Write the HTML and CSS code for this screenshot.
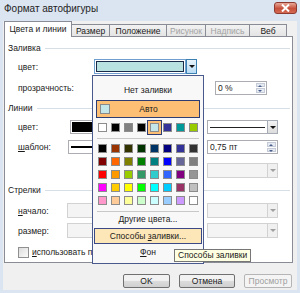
FILE: index.html
```html
<!DOCTYPE html>
<html lang="ru">
<head>
    <meta charset="UTF-8">
    <title>Формат автофигуры</title>
    <link rel="stylesheet" href="styles.css">
</head>
<body>
    <div class="window">
        <div class="titlebar">
            <span class="title">Формат автофигуры</span>
            <div class="close">
                <svg width="9" height="8" viewBox="0 0 9 8"><path d="M1 0.5 L8 7.5 M8 0.5 L1 7.5" stroke="#fff" stroke-width="2"/></svg>
            </div>
        </div>
        <div class="client">
            <div class="tabs">
                <div class="tab active" style="width:68px">Цвета и линии</div>
                <div class="tab" style="width:39px">Размер</div>
                <div class="tab" style="width:58px">Положение</div>
                <div class="tab disabled" style="width:40px">Рисунок</div>
                <div class="tab disabled" style="width:45px">Надпись</div>
                <div class="tab" style="width:38px">Веб</div>
            </div>
            <div class="panel">
                <div class="group-head"><span>Заливка</span></div>
                <div class="row r-fill">
                    <span class="label wide">цвет:</span>
                    <div class="combo fill-combo">
                        <div class="fill-field"><div class="fill-inner"></div></div>
                        <div class="drop active-drop"><i class="tri"></i></div>
                    </div>
                </div>
                <div class="row r-trans">
                    <span class="label">прозрачность:</span>
                    <div class="spin narrow"><span class="spin-text">0 %</span><div class="spin-btns"><i class="up"></i><i class="down"></i></div></div>
                </div>
                <div class="group-head g-lines"><span>Линии</span></div>
                <div class="row r-line">
                    <span class="label">цвет:</span>
                    <div class="swatch-box"></div>
                    <div class="combo right-ctl line-combo">
                        <div class="line-field"><i class="line-sample"></i></div>
                        <div class="drop"><i class="tri"></i></div>
                    </div>
                </div>
                <div class="row r-line">
                    <span class="label"><u>ш</u>аблон:</span>
                    <div class="pattern-box"><i class="pattern-line"></i></div>
                    <div class="spin right-ctl"><span class="spin-text">0,75 пт</span><div class="spin-btns"><i class="up"></i><i class="down"></i></div></div>
                </div>
                <div class="row r-third">
                    <div class="combo right-ctl off"><div class="off-field"></div><div class="drop off-drop"><i class="tri"></i></div></div>
                </div>
                <div class="group-head g-arrows"><span>Стрелки</span></div>
                <div class="row r-begin">
                    <span class="label"><u>н</u>ачало:</span>
                    <div class="off-box"></div>
                    <div class="combo right-ctl off"><div class="off-field"></div><div class="drop off-drop"><i class="tri"></i></div></div>
                </div>
                <div class="row r-size">
                    <span class="label">размер:</span>
                    <div class="off-box"></div>
                    <div class="combo right-ctl off"><div class="off-field"></div><div class="drop off-drop"><i class="tri"></i></div></div>
                </div>
                <div class="row r-check">
                    <i class="checkbox"></i>
                    <span class="check-label"><u>и</u>спользовать по</span>
                </div>
            </div>
            <div class="buttons">
                <div class="btn ok">OK</div>
                <div class="btn cancel">Отмена</div>
                <div class="btn preview">Просмотр</div>
            </div>
        </div>

        <!-- color dropdown -->
        <div class="popup">
            <div class="menu-item first">Нет заливки</div>
            <div class="auto-row"><i class="auto-swatch"></i><span>Авто</span></div>
            <div class="palette scheme">
                <i style="background:#ffffff"></i>
                <i style="background:#000000"></i>
                <i style="background:#808080"></i>
                <i style="background:#000000"></i>
                <i class="picked" style="background:#c4e6e8"></i>
                <i style="background:#333399"></i>
                <i style="background:#009999"></i>
                <i style="background:#99cc00"></i>
            </div>
            <div class="sep"></div>
            <div class="palette std">
                <i style="background:#000000"></i><i style="background:#993300"></i><i style="background:#333300"></i><i style="background:#003300"></i><i style="background:#003366"></i><i style="background:#000080"></i><i style="background:#333399"></i><i style="background:#333333"></i>
                <i style="background:#800000"></i><i style="background:#ff6600"></i><i style="background:#808000"></i><i style="background:#008000"></i><i style="background:#008080"></i><i style="background:#0000ff"></i><i style="background:#666699"></i><i style="background:#808080"></i>
                <i style="background:#ff0000"></i><i style="background:#ff9900"></i><i style="background:#99cc00"></i><i style="background:#339966"></i><i style="background:#33cccc"></i><i style="background:#3366ff"></i><i style="background:#800080"></i><i style="background:#969696"></i>
                <i style="background:#ff00ff"></i><i style="background:#ffcc00"></i><i style="background:#ffff00"></i><i style="background:#00ff00"></i><i style="background:#00ffff"></i><i style="background:#00ccff"></i><i style="background:#993366"></i><i style="background:#c0c0c0"></i>
                <i style="background:#ff99cc"></i><i style="background:#ffcc99"></i><i style="background:#ffff99"></i><i style="background:#ccffcc"></i><i style="background:#ccffff"></i><i style="background:#99ccff"></i><i style="background:#cc99ff"></i><i style="background:#ffffff"></i>
            </div>
            <div class="sep"></div>
            <div class="menu-item"><u>Д</u>ругие цвета...</div>
            <div class="menu-item hot">Способы <u>з</u>аливки...</div>
            <div class="menu-item"><u>Ф</u>он</div>
        </div>

        <div class="tooltip">Способы заливки</div>
    </div>
</body>
</html>
```

FILE: styles.css
```css
body {
    margin: 0;
    font-family: "Liberation Sans", Arial, sans-serif;
    font-size: 8.5px;
    color: #1a1a1a;
}

.window {
    width: 300px;
    height: 293px;
    box-sizing: border-box;
    padding: 0 3px 3px;
    background-color: #dbe5f1;
    display: flex;
    flex-direction: column;
    position: relative;
    overflow: hidden;
}

.titlebar {
    height: 21px;
    display: flex;
    justify-content: space-between;
    align-items: flex-start;
}

.title {
    font-size: 10px;
    margin: 3px 0 0 1px;
    color: #1e1e1e;
}

.close {
    width: 23px;
    height: 12px;
    margin-top: 2px;
    box-sizing: border-box;
    border: 1px solid #8e3a30;
    border-radius: 3px;
    background: linear-gradient(#e8a898, #c7503c 55%, #d46a52);
    display: flex;
    align-items: center;
    justify-content: center;
}

.client {
    flex: 1;
    background-color: #f0f0f0;
    padding: 0 4px 0 1px;
    display: flex;
    flex-direction: column;
}

/* tabs */
.tabs {
    height: 16px;
    display: flex;
    align-items: flex-end;
}

.tab {
    height: 13px;
    box-sizing: border-box;
    border: 1px solid #898c95;
    border-bottom: none;
    margin-left: -1px;
    background: linear-gradient(#f2f2f2, #e3e3e3);
    text-align: center;
    line-height: 12px;
    color: #1a1a1a;
}

.tab:first-child {
    margin-left: 0;
}

.tab.active {
    height: 16px;
    background: #fff;
    position: relative;
    z-index: 1;
    line-height: 15px;
}

.tab.disabled {
    color: #a3a3a3;
}

.panel {
    height: 227px;
    margin-top: -1px;
    box-sizing: border-box;
    border: 1px solid #898c95;
    background: #fff;
    display: flex;
    flex-direction: column;
}

.group-head {
    height: 12px;
    margin-top: 5px;
    padding: 0 2px 0 3px;
    display: flex;
    align-items: center;
    gap: 4px;
}

.group-head::after {
    content: "";
    flex: 1;
    border-top: 1px solid #d5dfe5;
}

.g-lines {
    margin-top: 7px;
}

.g-arrows {
    margin-top: 6px;
}

.row {
    display: flex;
    align-items: center;
    padding: 0 14px 0 13px;
}

.r-fill { height: 15px; margin-top: 5px; }
.r-trans { height: 15px; margin-top: 6px; }
.r-line { height: 14px; margin-top: 6px; }
.r-third { height: 15px; margin-top: 9px; }
.r-begin { height: 15px; margin-top: 7px; }
.r-size { height: 15px; margin-top: 5px; }
.r-check { height: 14px; margin-top: 7px; }

.label {
    width: 49px;
    flex-shrink: 0;
}

.label.wide {
    width: 76px;
}

.right-ctl {
    margin-left: auto;
}

/* combos */
.combo {
    display: flex;
    height: 15px;
}

.fill-combo {
    width: 103px;
}

.fill-field {
    flex: 1;
    box-sizing: border-box;
    border: 1px solid #6f9fcf;
    background: #fff;
    padding: 1px;
}

.fill-inner {
    height: 100%;
    box-sizing: border-box;
    border: 1px solid #1a2a48;
    background: #b8e2df;
}

.drop {
    width: 11px;
    box-sizing: border-box;
    border: 1px solid #a5acb5;
    background: linear-gradient(#f3f3f3, #dcdcdc);
    display: flex;
    align-items: center;
    justify-content: center;
}

.active-drop {
    border-color: #3c7fb1;
    background: linear-gradient(#e8f4fc, #b9dcf4);
}

.tri {
    width: 0;
    height: 0;
    border-left: 3px solid transparent;
    border-right: 3px solid transparent;
    border-top: 3px solid #111;
}

.line-combo {
    width: 71px;
    height: 14px;
}

.line-field {
    flex: 1;
    box-sizing: border-box;
    border: 1px solid #abadb3;
    border-right: none;
    display: flex;
    align-items: center;
    padding: 0 2px;
}

.line-sample {
    flex: 1;
    border-top: 1px solid #222;
}

.off {
    width: 71px;
}

.off-field {
    flex: 1;
    box-sizing: border-box;
    border: 1px solid #d2d2d2;
    border-right: none;
    background: #f4f4f4;
}

.off-drop {
    border-color: #d2d2d2;
    background: #f0f0f0;
}

.off-drop .tri {
    border-top-color: #a0a0a0;
}

.off-box {
    width: 70px;
    height: 15px;
    box-sizing: border-box;
    border: 1px solid #d2d2d2;
    background: #f4f4f4;
}

.swatch-box {
    width: 60px;
    height: 14px;
    margin-left: 3px;
    box-sizing: border-box;
    border: 1px solid #abadb3;
    padding: 1px;
    background: #000;
    box-shadow: inset 0 0 0 1px #fff;
}

.pattern-box {
    width: 60px;
    height: 14px;
    margin-left: 1px;
    box-sizing: border-box;
    border: 1px solid #abadb3;
    display: flex;
    align-items: center;
    padding: 0 2px;
}

.pattern-line {
    flex: 1;
    border-top: 2px solid #000;
}

/* spinners */
.spin {
    width: 71px;
    height: 14px;
    box-sizing: border-box;
    border: 1px solid #abadb3;
    display: flex;
    background: #fff;
}

.spin.narrow {
    width: 52px;
    margin-left: 148px;
}

.spin-text {
    flex: 1;
    padding-left: 2px;
    line-height: 12px;
}

.spin-btns {
    width: 9px;
    display: flex;
    flex-direction: column;
    gap: 1px;
    padding: 1px;
}

.spin-btns i {
    flex: 1;
    background: #e6ebf3;
    border: 1px solid #c4cbd6;
    position: relative;
}

.spin-btns .up::after,
.spin-btns .down::after {
    content: "";
    position: absolute;
    left: 1px;
    top: 1px;
    border-left: 2px solid transparent;
    border-right: 2px solid transparent;
}

.spin-btns .up::after {
    border-bottom: 2px solid #4a5e8c;
}

.spin-btns .down::after {
    border-top: 2px solid #4a5e8c;
}

.checkbox {
    width: 9px;
    height: 9px;
    border: 1px solid #8f8f8f;
    background: linear-gradient(135deg, #dcdcdc, #fbfbfb);
    margin-right: 3px;
}

.check-label {
    white-space: nowrap;
}

/* bottom buttons */
.buttons {
    height: 14px;
    margin-top: 11px;
    display: flex;
    gap: 9px;
    padding-left: 119px;
}

.btn {
    box-sizing: border-box;
    border: 1px solid #707070;
    border-radius: 2px;
    background: linear-gradient(#f2f2f2 45%, #dcdcdc 50%, #d0d0d0);
    text-align: center;
    line-height: 12px;
}

.ok { width: 47px; }
.cancel { width: 56px; }

.preview {
    width: 48px;
    color: #a0a0a0;
    border-color: #b5b5b5;
    background: #f4f4f4;
}

/* popup with colours */
.popup {
    position: absolute;
    left: 92px;
    top: 75px;
    width: 112px;
    height: 189px;
    box-sizing: border-box;
    border: 1px solid #4b5a8c;
    background: #f8f8f8;
    z-index: 5;
    padding: 0 2px;
}

.menu-item {
    height: 15px;
    line-height: 15px;
    text-align: center;
}

.menu-item.first {
    margin-top: 6px;
    height: 16px;
    line-height: 16px;
}

.menu-item.hot {
    margin: 1px -1px;
    height: 16px;
    line-height: 14px;
    box-sizing: border-box;
    border: 1px solid #3b4a86;
    background: #fde7b8;
}

.auto-row {
    height: 18px;
    margin: 2px 1px 0;
    box-sizing: border-box;
    border: 1px solid #2d3c72;
    background: #fdbf73;
    display: flex;
    align-items: center;
    padding-left: 3px;
}

.auto-row span {
    flex: 1;
    text-align: center;
    padding-right: 12px;
}

.auto-swatch {
    width: 10px;
    height: 10px;
    box-sizing: border-box;
    border: 1px solid #8a8a8a;
    background: #c4e6e8;
}

.palette {
    display: grid;
    grid-template-columns: repeat(8, 9px);
    column-gap: 4px;
    row-gap: 4px;
    padding-left: 3px;
}

.palette i {
    height: 9px;
    box-sizing: border-box;
    border: 1px solid #8c8c8c;
}

.scheme {
    margin-top: 5px;
}

.std {
    margin-top: 5px;
}

.palette .picked {
    outline: 2px solid #fdbf73;
    box-shadow: 0 0 0 3px #2d3c72;
}

.sep {
    height: 1px;
    margin: 6px 2px 0;
    background: #c8c8c8;
}

.tooltip {
    position: absolute;
    left: 174px;
    top: 249px;
    height: 13px;
    box-sizing: border-box;
    border: 1px solid #767676;
    background: #ffffe1;
    padding: 0 3px;
    line-height: 11px;
    z-index: 6;
    white-space: nowrap;
}
```
